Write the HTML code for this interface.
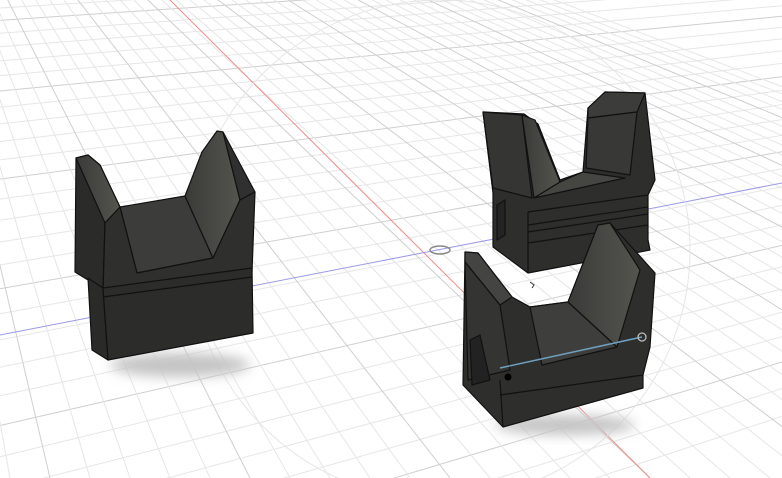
<!DOCTYPE html>
<html><head><meta charset="utf-8"><style>
html,body{margin:0;padding:0;background:#fff;width:782px;height:478px;overflow:hidden}
svg{display:block;overflow:hidden}
</style></head><body>
<svg id="s" width="782" height="478" viewBox="0 0 782 478" xmlns="http://www.w3.org/2000/svg">
<defs>
<filter id="b" x="-50%" y="-50%" width="200%" height="200%"><feGaussianBlur stdDeviation="6"/></filter>
<linearGradient id="g1" x1="0" y1="0" x2="1" y2="0"><stop offset="0" stop-color="#3a3a38"/><stop offset="1" stop-color="#55554f"/></linearGradient>
</defs>
<g id="grid"></g>
<line x1="170" y1="0" x2="650" y2="478" stroke="#f08a8a" stroke-width="1"/>
<line x1="0" y1="335" x2="782" y2="183" stroke="#9a9ae8" stroke-width="1"/>
<circle cx="440" cy="250" r="250" fill="none" stroke="#e6e6e6" stroke-width="1"/>
<ellipse cx="440" cy="250" rx="10" ry="4" fill="none" stroke="#888" stroke-width="1.5"/>
<ellipse cx="180" cy="365" rx="70" ry="12" fill="#c4c4c4" filter="url(#b)"/>
<ellipse cx="565" cy="425" rx="70" ry="10" fill="#c4c4c4" filter="url(#b)"/>
<g stroke="#111" stroke-width="1.2" stroke-linejoin="round">
<!-- left object -->
<polygon points="76,158 88,155 100,165 120,207 105,223 103,290 88,280 75,272" fill="#2b2b2a"/>
<polygon points="88,278 103,288 108,360 92,350" fill="#2a2a29"/>
<polygon points="76,158 88,155 100,165 120,207 105,223" fill="url(#g1)"/>
<polygon points="120,207 185,196 213,258 137,273" fill="#3c3c3a"/>
<polygon points="202,152 217,131 223,132 240,200 213,258 185,196" fill="url(#g1)"/>
<polygon points="223,132 240,200 255,192" fill="#303030"/>
<polygon points="105,223 120,207 137,273 213,258 240,200 255,192 252,272 103,292" fill="#2f2f2e"/>
<polygon points="103,288 252,268 253,333 108,360" fill="#2c2c2b"/>
<line x1="103" y1="297" x2="252" y2="277"/>
<!-- top-right object -->
<polygon points="483,112 524,114 538,124 560,180 583,172 588,108 605,92 645,93 655,180 648,195 648,240 650,250 528,273 493,247 493,193" fill="#2e2e2d"/>
<polygon points="483,112 522,115 532,198 493,188" fill="#353534"/>
<polygon points="522,115 535,120 560,182 534,198" fill="url(#g1)"/>
<polygon points="560,182 583,172 625,178 534,198" fill="#454542"/>
<polygon points="588,108 605,92 645,93 637,112 588,118" fill="#3c3c3a"/>
<polygon points="588,118 637,112 630,175 586,168" fill="#383836"/>
<line x1="528" y1="212" x2="648" y2="195"/>
<line x1="528" y1="225" x2="648" y2="207"/>
<line x1="528" y1="232" x2="648" y2="214"/>
<line x1="528" y1="243" x2="648" y2="225"/>
<line x1="528" y1="212" x2="528" y2="273"/>
<polygon points="497,205 505,200 505,235 497,240" fill="#242424"/>
<!-- bottom-right object -->
<polygon points="465,252 478,253 512,297 530,307 568,302 598,225 610,223 655,273 650,347 643,375 643,388 503,427 463,385" fill="#2e2e2d"/>
<polygon points="465,252 478,253 512,297 500,305 465,262" fill="#444442"/>
<polygon points="530,307 568,302 617,347 542,365" fill="#3e3e3c"/>
<polygon points="568,302 598,225 610,223 640,270 617,347" fill="url(#g1)"/>
<polygon points="465,262 500,305 510,370 468,380" fill="#343433"/>
<line x1="500" y1="395" x2="643" y2="375"/>
<line x1="503" y1="427" x2="500" y2="380"/>
<polygon points="470,340 480,335 490,380 472,385" fill="#222"/>
</g>
<line x1="500" y1="368" x2="642" y2="337" stroke="#6fa0c0" stroke-width="1.5"/>
<circle cx="642" cy="337" r="4" fill="none" stroke="#bbb" stroke-width="1.3"/>
<circle cx="508" cy="377" r="3.5" fill="#000"/>
<path d="M530 282 l4 3 -2 3" stroke="#333" fill="none"/>
</svg>
<script>
(function(){
var g=document.getElementById('grid'),h='';
function L(x1,y1,x2,y2,c){h+='<line x1="'+x1+'" y1="'+y1+'" x2="'+x2+'" y2="'+y2+'" stroke="'+c+'" stroke-width="1"/>';}
var V1=[2480,-146];
var y=-40,k=0;
while(y<700){var s=(V1[1]-y)/(V1[0]);var yr=y+s*782;L(0,y,782,yr,k%5==0?'#cfcfcf':'#e6e6e6');y+=12+Math.max(0,y)*0.045;k++;}
var V2=[-123,-258];
for(var i=-30;i<30;i++){var x=650+i*40;var t=(0-V2[1])/(478-V2[1]);var xt=V2[0]+(x-V2[0])*t;L(xt,0,x,478,(i%5==0)?'#cfcfcf':'#e6e6e6');}
g.innerHTML=h;
})();
</script>
</body></html>
